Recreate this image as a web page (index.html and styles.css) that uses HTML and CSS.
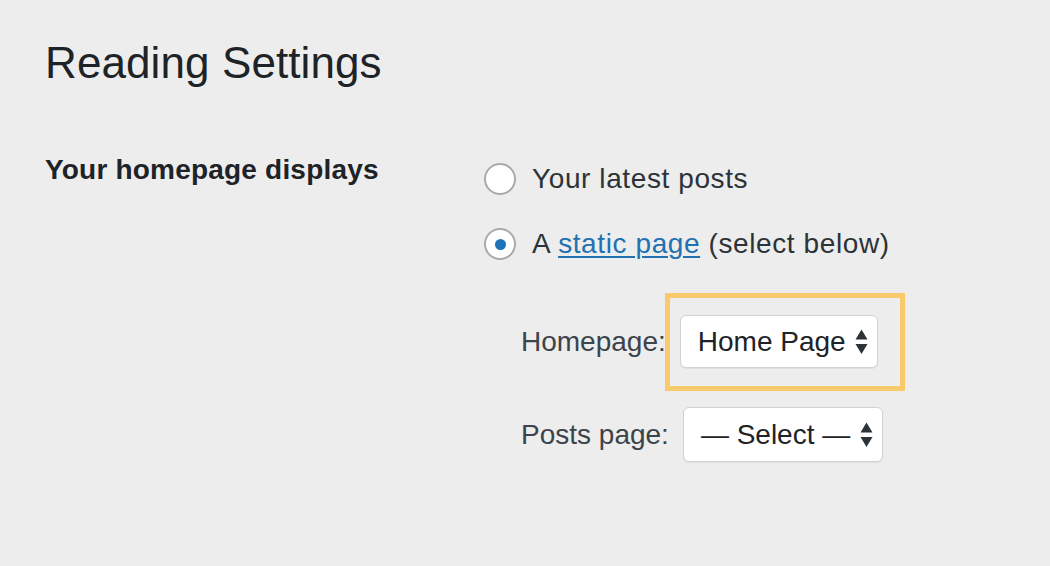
FILE: index.html
```html
<!DOCTYPE html>
<html lang="en">
<head>
<meta charset="utf-8">
<title>Reading Settings</title>
<link rel="stylesheet" href="styles.css">
</head>
<body>
<div class="wrap">
  <h1 class="title">Reading Settings</h1>
  <div class="form-row">
    <div class="th">Your homepage displays</div>
    <div class="td">
      <label class="radio-row">
        <span class="radio"></span>
        <span class="radio-text">Your latest posts</span>
      </label>
      <label class="radio-row">
        <span class="radio checked"><span class="dot"></span></span>
        <span class="radio-text">A <a class="link" href="#">static page</a> (select below)</span>
      </label>
      <div class="select-row first">
        <span class="select-label">Homepage:</span>
        <div class="select-wrap">
          <div class="select home">
            <span class="select-text">Home Page</span>
            <svg class="arrows" width="13" height="26" viewBox="0 0 13 26"><polygon points="0.5,10.5 6.5,0.5 12.5,10.5"/><polygon points="0.5,15 12.5,15 6.5,25"/></svg>
          </div>
          <div class="highlight"></div>
        </div>
      </div>
      <div class="select-row second">
        <span class="select-label">Posts page:</span>
        <div class="select-wrap">
          <div class="select posts">
            <span class="select-text">— Select —</span>
            <svg class="arrows" width="13" height="26" viewBox="0 0 13 26"><polygon points="0.5,10.5 6.5,0.5 12.5,10.5"/><polygon points="0.5,15 12.5,15 6.5,25"/></svg>
          </div>
        </div>
      </div>
    </div>
  </div>
</div>
</body>
</html>
```

FILE: styles.css
```css
html, body {
  margin: 0;
  padding: 0;
  background: #ededed;
}

body {
  font-family: "Liberation Sans", Arial, sans-serif;
  color: #2c3338;
  width: 1050px;
  height: 566px;
  overflow: hidden;
}

.wrap {
  padding: 37px 0 0 45px;
}

.title {
  margin: 0;
  font-size: 44px;
  line-height: 52px;
  font-weight: 400;
  color: #1d2327;
  letter-spacing: 0.1px;
}

.form-row {
  display: flex;
  align-items: flex-start;
  margin-top: 63px;
}

.th {
  width: 438px;
  font-size: 28px;
  line-height: 36px;
  font-weight: 700;
  color: #1d2327;
  letter-spacing: 0.2px;
}

.td {
  display: flex;
  flex-direction: column;
  padding-top: 9px;
  font-size: 28px;
  line-height: 36px;
}

.radio-row {
  display: flex;
  align-items: center;
  height: 36px;
  margin-bottom: 29px;
}

.radio-row + .radio-row {
  margin-bottom: 0;
}

.radio {
  width: 28px;
  height: 28px;
  border: 2px solid #a7aaad;
  border-radius: 50%;
  background: #fff;
  margin: 0 16px 0 1px;
  display: flex;
  align-items: center;
  justify-content: center;
  flex-shrink: 0;
}

.dot {
  width: 11px;
  height: 11px;
  border-radius: 50%;
  background: #1e73b8;
}

.radio-text {
  color: #2c3338;
  letter-spacing: 0.6px;
}

.link {
  color: #2271b1;
  text-decoration: underline;
  text-decoration-thickness: 2px;
  text-underline-offset: 3px;
}

.select-row {
  display: flex;
  align-items: center;
  padding-left: 38px;
}

.select-row.first {
  margin-top: 53px;
}

.select-row.second {
  margin-top: 39px;
}

.select-label {
  color: #3c434a;
  margin-right: 14px;
}

.select-wrap {
  position: relative;
}

.select {
  display: flex;
  align-items: center;
  box-sizing: border-box;
  background: #fff;
  border: 1px solid #d2d2d4;
  border-radius: 6px;
  box-shadow: 0 1px 1px rgba(0, 0, 0, 0.06);
  padding: 0 9px 0 17px;
  color: #1d2327;
}

.select.home {
  width: 198px;
  height: 53px;
}

.select.posts {
  width: 200px;
  height: 55px;
}

.select-text {
  white-space: nowrap;
}

.arrows {
  margin-left: auto;
  fill: #2c3338;
  display: block;
}

.highlight {
  position: absolute;
  left: -15px;
  top: -22px;
  right: -27px;
  bottom: -23px;
  border: 5px solid #f9ca6b;
  pointer-events: none;
}
```
